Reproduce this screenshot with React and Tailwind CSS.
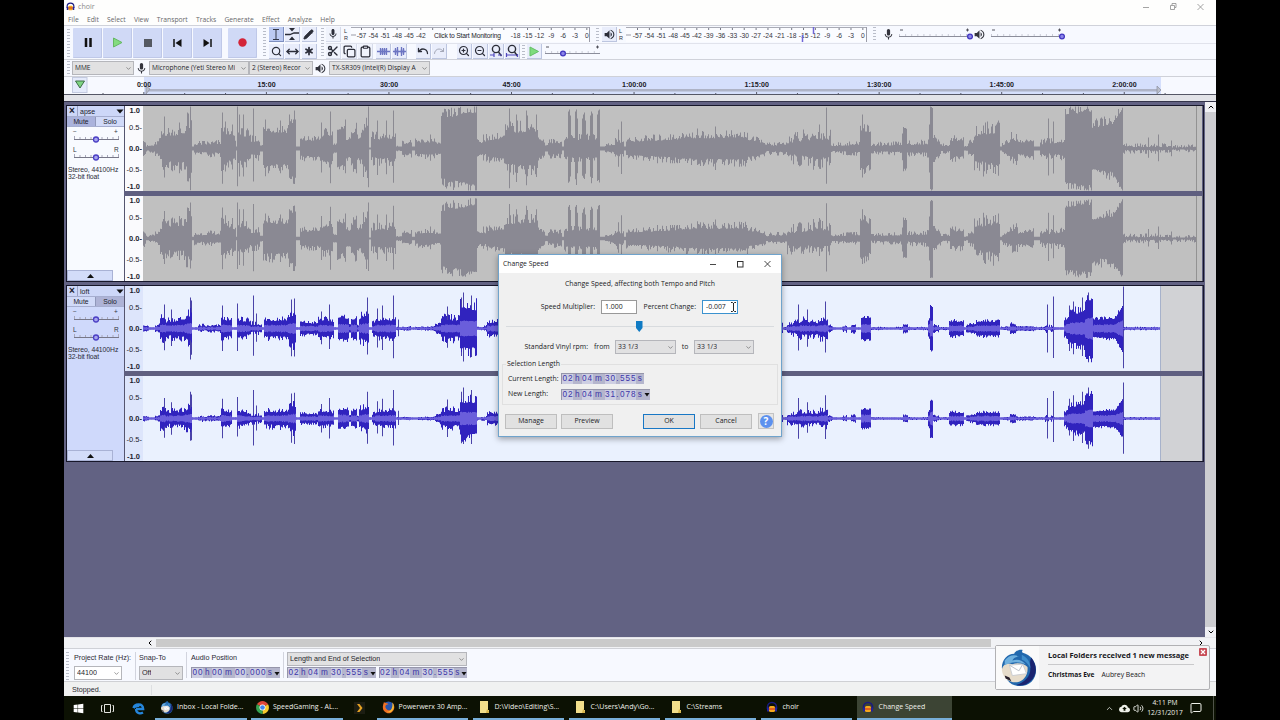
import clsx from "clsx";
import {
    Asterisk,
    ChevronDown,
    ChevronLeft,
    ChevronRight,
    ChevronUp,
    Clipboard,
    Copy,
    MessageSquare,
    MoveHorizontal,
    Pencil,
    Redo,
    Scissors,
    Search,
    Undo,
    Volume2,
    ZoomIn,
    ZoomOut,
} from "lucide-react";
import { MdCloudUpload, MdMic, MdVolumeUp } from "react-icons/md";
import { FaWindows } from "react-icons/fa";

// [from, to, start height, end height, jitter] in pixels along the timeline
const APSE_SEGMENTS = [
    [0, 3, 8, 5, 3], [3, 12, 2, 3, 2], [12, 17, 4, 7, 5], [17, 20, 10, 15, 8], [20, 42, 14, 15, 10],
    [42, 49, 20, 24, 18], [49, 51, 2, 2, 0], [51, 78, 4, 5, 5], [78, 93, 19, 8, 7], [93, 94, 2, 2, 0],
    [94, 107, 14, 11, 10], [107, 117, 7, 8, 9], [117, 120, 3, 3, 1], [120, 145, 18, 17, 11],
    [145, 153, 22, 31, 9], [153, 157, 2, 2, 0], [157, 178, 8, 9, 6], [178, 190, 13, 14, 9],
    [190, 194, 4, 4, 2], [194, 203, 20, 15, 8], [203, 208, 9, 9, 4], [208, 214, 15, 20, 8],
    [214, 219, 10, 12, 5], [219, 226, 16, 28, 13], [226, 228, 1, 1, 0], [228, 253, 10, 11, 9],
    [253, 259, 2, 2, 1], [259, 269, 5, 6, 4], [269, 272, 2, 2, 0], [272, 292, 6, 7, 5],
    [292, 298, 5, 5, 2], [298, 334, 31, 38, 10], [334, 338, 8, 6, 3], [338, 343, 6, 6, 4],
    [343, 362, 9, 11, 7], [362, 395, 17, 19, 12], [395, 402, 10, 6, 3], [402, 405, 3, 3, 1],
    [405, 419, 6, 6, 5], [419, 421, 2, 2, 0], [421, 457, 9, 10, 6], [457, 462, 2, 2, 0],
    [462, 472, 3, 4, 3], [472, 481, 7, 6, 6], [481, 483, 2, 2, 0], [483, 500, 7, 8, 5],
    [500, 535, 8, 10, 7], [535, 605, 11, 12, 8], [605, 622, 9, 6, 5], [622, 644, 3, 4, 4],
    [644, 670, 7, 10, 12], [670, 688, 12, 9, 13], [688, 717, 3, 4, 4], [717, 728, 20, 17, 11],
    [728, 759, 3, 4, 4], [759, 760, 12, 12, 4], [760, 764, 21, 20, 4], [764, 785, 4, 5, 5],
    [785, 786, 9, 9, 0], [786, 787, 24, 24, 0], [787, 790, 41, 41, 3],
    [790, 798, 11, 4, 4], [798, 807, 3, 3, 3], [807, 821, 8, 9, 6], [821, 825, 2, 2, 1],
    [825, 831, 5, 6, 4], [831, 857, 14, 18, 15], [857, 859, 2, 2, 0], [859, 867, 4, 7, 5],
    [867, 875, 9, 9, 11], [875, 891, 6, 8, 4], [891, 897, 2, 2, 0], [897, 922, 5, 7, 6],
    [922, 949, 35, 38, 8], [949, 970, 22, 25, 10], [970, 980, 27, 42, 6], [980, 1029, 2, 2, 4],
    [1029, 1054, 1, 2, 3],
];

const APSE_SPIKES = [
    [21, 32], [36, 26], [44, 36], [47, 42], [79, 36], [82, 27], [89, 24], [94, 42], [96, 34], [100, 34],
    [110, 40], [122, 29], [137, 28], [146, 34], [151, 38], [178, 26], [187, 37], [202, 29], [225, 42],
    [234, 28], [243, 28], [250, 38], [287, 14], [340, 14], [366, 40], [367, 27], [373, 34], [374, 28],
    [383, 38], [384, 33], [393, 34], [425, 37], [426, 39], [427, 33], [432, 37], [433, 39], [434, 30],
    [439, 30], [440, 34], [441, 36], [442, 28], [447, 33], [448, 37], [449, 35], [454, 34], [455, 38],
    [456, 39], [475, 19], [478, 27], [554, 20], [572, 22], [676, 24], [683, 41], [719, 34],
    [905, 30], [910, 27], [1005, 11], [1015, 14], [1028, 8],
];

const LOFT_SEGMENTS = [
    [0, 6, 3, 2, 1], [6, 12, 1, 1, 0], [12, 17, 2, 4, 2], [17, 23, 10, 10, 6], [23, 42, 7, 9, 6],
    [42, 49, 11, 14, 9], [49, 55, 1, 1, 0], [55, 61, 2, 3, 3], [61, 78, 2, 3, 2], [78, 89, 10, 7, 4],
    [89, 94, 1, 1, 0], [94, 107, 9, 6, 5], [107, 119, 4, 4, 5], [119, 121, 1, 1, 0], [121, 145, 8, 9, 7],
    [145, 153, 12, 15, 9], [153, 157, 1, 1, 0], [157, 175, 6, 5, 3], [175, 191, 9, 7, 5],
    [191, 195, 1, 1, 0], [195, 206, 11, 10, 4], [206, 208, 4, 4, 1], [208, 214, 9, 10, 3],
    [214, 216, 3, 3, 1], [216, 226, 10, 14, 7], [226, 229, 1, 1, 0], [229, 234, 5, 8, 3],
    [234, 253, 8, 9, 5], [253, 257, 1, 1, 1], [257, 268, 1, 2, 1], [268, 272, 1, 1, 0],
    [272, 292, 1, 2, 1], [292, 298, 3, 6, 2], [298, 317, 9, 9, 7], [317, 334, 21, 20, 12],
    [334, 344, 1, 2, 2], [344, 360, 6, 7, 4], [360, 460, 5, 5, 5], [460, 640, 4, 4, 4],
    [640, 644, 1, 2, 0], [644, 657, 4, 6, 5], [657, 676, 7, 6, 6], [676, 685, 8, 9, 7],
    [685, 690, 3, 2, 2], [690, 699, 1, 1, 0], [699, 704, 2, 3, 2], [704, 708, 1, 1, 0],
    [708, 713, 3, 4, 2], [713, 718, 1, 1, 0], [718, 728, 11, 11, 3], [728, 744, 1, 1, 1],
    [744, 753, 1, 1, 0], [753, 760, 1, 1, 1], [760, 765, 4, 4, 2], [765, 785, 1, 1, 1],
    [785, 787, 8, 13, 2], [787, 790, 22, 22, 3], [790, 796, 3, 2, 2], [796, 806, 1, 1, 1],
    [806, 821, 7, 7, 3], [821, 823, 1, 1, 0], [823, 833, 3, 5, 2], [833, 857, 7, 7, 3],
    [857, 867, 1, 2, 1], [867, 873, 5, 4, 2], [873, 891, 2, 2, 1], [891, 902, 1, 1, 1],
    [902, 912, 2, 1, 3], [912, 921, 1, 1, 0], [921, 928, 7, 16, 5], [928, 942, 15, 17, 8],
    [942, 950, 26, 31, 7], [950, 972, 9, 10, 3], [972, 980, 11, 24, 3], [980, 1017, 1, 1, 1],
];

const LOFT_SPIKES = [
    [21, 24], [28, 19], [47, 31], [48, 28], [79, 23], [94, 25], [110, 33], [113, 15], [148, 29],
    [151, 30], [178, 17], [186, 24], [224, 31], [234, 20], [239, 23], [250, 33], [255, 9], [304, 22],
    [318, 31], [320, 36], [328, 33], [655, 24], [664, 19], [682, 27], [904, 24], [910, 32], [926, 23],
    [930, 27], [939, 31], [945, 36], [980, 42],
];

function noise(x, seed) {
    const n = Math.sin(x * 12.9898 + seed * 78.233) * 43758.5453;
    return n - Math.floor(n);
}

function buildWave(segments, spikes, seed, scale) {
    let peak = "";
    let rms = "";
    const mid = 42.5;
    segments.forEach(([from, to, start, end, jitter]) => {
        for (let x = from; x < to; x++) {
            const base = start + ((end - start) * (x - from)) / (to - from);
            const up = Math.min(42, (base + jitter * (noise(x, seed) ** 2 - 0.15)) * scale);
            const down = Math.min(42, (base + jitter * (noise(x, seed + 3) ** 2 - 0.15)) * scale);
            peak += `M${x} ${(mid - Math.max(up, 1)).toFixed(1)}h1V${(mid + Math.max(down, 1)).toFixed(1)}h-1z`;
            const core = Math.max(0.6, base * scale * 0.34 + noise(x, seed + 7));
            rms += `M${x} ${(mid - core).toFixed(1)}h1V${(mid + core).toFixed(1)}h-1z`;
        }
    });
    const lines = spikes
        .map(([x, h]) => {
            const up = h * (scale < 1 ? 0.86 : 1);
            return `M${x} ${(mid - up).toFixed(1)}h1V${(mid + up * (0.82 + noise(x, seed) * 0.18)).toFixed(1)}h-1z`;
        })
        .join("");
    return { peak, rms, lines };
}

function Waveform({ kind, second }) {
    const loft = kind === "loft";
    const scale = second ? (loft ? 0.82 : 0.92) : 1;
    const wave = buildWave(loft ? LOFT_SEGMENTS : APSE_SEGMENTS, loft ? LOFT_SPIKES : APSE_SPIKES, second ? 5 : 2, scale);
    return (
        <svg width="1059" height="85" viewBox="0 0 1059 85" className="block shrink-0">
            <rect width="1059" height="85" fill={loft ? "#d1d2d5" : "#c0c0c0"} />
            {loft && <rect width="1018" height="85" fill="#eaf1fe" />}
            <path d={wave.lines} fill={loft ? "#4a43a8" : "#8b8a92"} />
            <path d={wave.peak} fill={loft ? "#3023be" : "#8a8993"} />
            {loft && <path d={wave.rms} fill="#6a5edb" />}
            <rect x={loft ? 1017 : 1053} width="1" height="85" fill={loft ? "#a7b2cb" : "#929292"} />
        </svg>
    );
}

function VerticalScale({ selected }) {
    return (
        <div
            className={clsx(
                "flex h-[85px] w-[19px] shrink-0 flex-col items-end justify-between border-l border-[#55556f] pr-[1px] font-['Liberation_Sans'] text-[7.5px] leading-[9px] text-[#22222c]",
                selected ? "bg-[#dde5fb]" : "bg-[#fafafd]"
            )}
        >
            <b className="pr-[2px]">1.0</b>
            <span className="pb-[4px]">0.5-</span>
            <b>0.0-</b>
            <span className="pt-[4px]">-0.5-</span>
            <b className="pr-[2px]">-1.0</b>
        </div>
    );
}

function PanelSlider({ left, right }) {
    return (
        <svg width="58" height="18" viewBox="0 0 58 18" className="block" fontFamily="Liberation Sans" fontSize="6.5">
            <text x="6" y="7" fill="#33333d">{left}</text>
            <text x="47" y="7" fill="#33333d">{right}</text>
            <path d="M7 12.5H52" stroke="#777788" />
            <path d="M7.5 9v3M13 10v2M18.500 10v2M24 10v2M35 10v2M40.500 10v2M46 10v2M51.500 9v3" stroke="#a7a7ba" />
            <circle cx="29" cy="12.500" r="2.500" fill="#a6a3ef" stroke="#4b3fc4" strokeWidth="1.300" />
        </svg>
    );
}

function Track({ name, kind, muted, soloed }) {
    return (
        <div className="flex h-[177px] w-[1138px] border border-[#17172a] bg-[#5f5f80]">
            <div className={clsx("flex w-[57px] shrink-0 flex-col", kind === "loft" ? "bg-[#cfd9fb]" : "bg-[#f8faff]")}>
                <div className="flex h-[10px] items-center bg-[#cdd7f8] font-['Liberation_Sans'] text-[7px] text-[#20202a]">
                    <span className="flex h-full w-[11px] items-center justify-center border-r border-[#9aa2c6] text-[10px] font-bold leading-none">×</span>
                    <span className="flex-1 pl-[2px] leading-none">{name}</span>
                    <svg width="8" height="5" viewBox="0 0 8 5"><path d="M.5.500h7L4 4.500z" fill="#111" /></svg>
                </div>
                <div className="flex h-[11px] border-y border-[#a6aed0] text-center font-['Liberation_Sans'] text-[6.8px] leading-[9px] text-[#20202a]">
                    <span className={clsx("flex-1 border-r border-[#9098ba]", muted ? "bg-[#aab2dc]" : "bg-[#d1daf8]")}>Mute</span>
                    <span className={clsx("flex-1", soloed ? "bg-[#aeb3d6]" : "bg-[#d1daf8]")}>Solo</span>
                </div>
                <PanelSlider left="−" right="+" />
                <PanelSlider left="L" right="R" />
                <div className="whitespace-nowrap pl-[1px] pt-[3px] font-['Liberation_Sans'] text-[6.8px] leading-[7px] tracking-[-0.05px] text-[#2a2a36]">
                    Stereo, 44100Hz<br />32-bit float
                </div>
                <div className="mt-auto flex h-[11px] w-[46px] items-center justify-center border border-[#a9b2d5] bg-[#d3dcf9]">
                    <svg width="7" height="4" viewBox="0 0 7 4"><path d="M0 4h7L3.500 0z" fill="#111" /></svg>
                </div>
            </div>
            <div className="flex flex-col gap-[5px]">
                <div className="flex">
                    <VerticalScale selected={kind === "loft"} />
                    <Waveform kind={kind} />
                </div>
                <div className="flex">
                    <VerticalScale selected={kind === "loft"} />
                    <Waveform kind={kind} second />
                </div>
            </div>
        </div>
    );
}

function Grabber({ className, height = 28 }) {
    return (
        <svg width="5" height={height} className={clsx("shrink-0", className)}>
            <path d={`M2.500 0V${height}`} stroke="#b9bdc9" strokeWidth="3" strokeDasharray="1 2" />
        </svg>
    );
}

function TransportButton({ children }) {
    return <div className="flex h-[30px] w-[29px] shrink-0 items-center justify-center rounded-[1px] bg-[#d0d9f6] shadow-[inset_-1px_-1px_0_#bfc8e8]">{children}</div>;
}

function Tool({ active, pale, className, children }) {
    return (
        <div
            className={clsx(
                "flex size-[15px] shrink-0 items-center justify-center border-b border-r text-[#2b2d38]",
                active ? "border-[#7d8fc0] bg-[#bccaf2]" : pale ? "border-[#d6dbea] bg-[#f0f3fc]" : "border-[#bcc5df] bg-[#e9edfb]",
                className
            )}
        >
            {children}
        </div>
    );
}

function ClipIcon({ gap }) {
    return (
        <svg width="13" height="11" viewBox="0 0 13 11" stroke="#6c75c2">
            <path d={gap ? "M0 5.500h13M2.500 2v7M4.500 1v9M8.500 1v9M10.500 2v7" : "M0 5.500h13M3.500 2v7M5.500 2v7M7.500 2v7M9.500 2v7"} strokeWidth="1.300" />
            {gap ? <path d="M1.500 5.500h4M7.500 5.500h4" strokeWidth="4" opacity=".45" /> : <path d="M3 5.500h7" strokeWidth="5" opacity=".45" />}
        </svg>
    );
}

function FitIcon({ wide }) {
    return (
        <svg width="14" height="14" viewBox="0 0 14 14" fill="none" stroke="#2b2d38" strokeWidth="1.400">
            <circle cx="7" cy="5" r="3.600" />
            <path d="M9.500 8l3 4" />
            <path d={wide ? "M1.500 9v4M12.500 10v3M2 11h9" : "M1 11h4M9 11h4M5 9v4"} stroke="#5148bf" strokeWidth="1.200" />
        </svg>
    );
}

function Meter({ width, offset, message, levels }) {
    const marks = Array.from({ length: 20 }, (_, i) => -57 + i * 3);
    return (
        <svg width={width} height="15" viewBox={`0 0 ${width} 15`} className="shrink-0 bg-[#fbfcff]" fontFamily="Liberation Sans" fontSize="6.700" fill="#33333d">
            <path d={`M0 .500H${width}`} stroke="#a9abb5" />
            <path d={`M0 8h5M${width - 0.5} 0v15`} stroke="#9b9ca8" />
            {marks.map((mark, i) => (
                <g key={mark}>
                    <path d={`M${offset + i * 11.86} 1v2`} stroke="#777986" />
                    {!(message && i > 5 && i < 13) && <text x={offset + i * 11.86} y="10.500" textAnchor="middle">{mark}</text>}
                </g>
            ))}
            {message && <text x="83" y="10.500" textLength="67" fill="#22222a">{message}</text>}
            {levels && <path d="M176.500 8v7M187.500 0v7" stroke="#7066d8" strokeWidth="1.500" />}
        </svg>
    );
}

function LeftRight() {
    return (
        <div className="flex w-[7px] shrink-0 flex-col font-['Liberation_Sans'] text-[5.5px] leading-[7px] text-[#33333d]">
            <span>L</span>
            <span>R</span>
        </div>
    );
}

function ToolbarSlider({ width, at }) {
    return (
        <svg width={width + 3} height="15" viewBox={`0 0 ${width + 3} 15`} className="shrink-0">
            <path d={`M1 9.500H${width}`} stroke="#8c8e9b" />
            <path d={`M1 8H${width}`} stroke="#b9bbc8" strokeDasharray="1 5.100" strokeWidth="1.500" />
            <path d={`M2 3h3M${width - 4} 3h3M${width - 2.5} 1.500v3`} stroke="#44444f" strokeWidth=".9" />
            <circle cx={at} cy="9.500" r="2.400" fill="#8b85e8" stroke="#4338c0" strokeWidth="1.300" />
        </svg>
    );
}

function Select({ className, children }) {
    return (
        <div className={clsx("flex shrink-0 items-center justify-between overflow-hidden whitespace-nowrap border border-[#b5b6bb] pl-[2px] pr-[1px] text-[#26262c]", className)}>
            <span className="overflow-hidden">{children}</span>
            <ChevronDown size={7} strokeWidth={2} className="shrink-0 text-[#555]" />
        </div>
    );
}

function TimeField({ value, arrow }) {
    return (
        <div className="flex h-[11px] w-fit shrink-0 items-center border-l border-t border-[#9696aa] bg-[#b5b6cd] font-['Liberation_Sans'] text-[8.2px] leading-[10px] text-[#3b35a8]">
            {value.split("").map((char, i) => (
                <span
                    key={i}
                    className={clsx(
                        "h-[10px] text-center",
                        /\d/.test(char) && "w-[5.5px] bg-[#cdcee2]",
                        char === "h" && "w-[8.5px]",
                        char === "m" && "w-[12px]",
                        char === "." && "w-[4px]",
                        char === "s" && "w-[7.5px]"
                    )}
                >
                    {char}
                </span>
            ))}
            {arrow && <svg width="6" height="5" viewBox="0 0 6 5"><path d="M.5 1h5L3 4.500z" fill="#111" /></svg>}
        </div>
    );
}

function Timeline() {
    const labels = ["0:00", "15:00", "30:00", "45:00", "1:00:00", "1:15:00", "1:30:00", "1:45:00", "2:00:00"];
    const ticks = Array.from({ length: 27 }, (_, i) => 39 + i * 40.85);
    return (
        <svg width="1152" height="18" viewBox="0 0 1152 18" className="block" fontFamily="Liberation Sans" fontSize="7.100" fontWeight="bold">
            <rect width="1152" height="18" fill="#f7f9ff" />
            <rect x="80" width="1017" height="18" fill="#d5dffc" />
            <rect x="82" y="12" width="1012" height="2.500" fill="#aeb3c6" />
            <path d="M82 9v8l4-5zM1093 9v8l4-4z" fill="#b9bdca" stroke="#8c909f" strokeWidth=".7" />
            {ticks.map((x, i) => <path key={x} d={`M${x} ${i % 3 === 1 ? 15 : 16}v3`} stroke="#555765" />)}
            {labels.map((label, i) => (
                <text key={label} x={80 + i * 122.55} y="10.300" textAnchor="middle" fill="#1c1c28">{label}</text>
            ))}
            <path d="M0 17.500H1152" stroke="#555766" />
            <rect x="8.500" y=".5" width="14.500" height="15" fill="#e4eafb" stroke="#c3cae0" />
            <path d="M11.500 4h9L16 11z" fill="#7ed482" stroke="#3d6e47" />
        </svg>
    );
}

function AudacityIcon({ size = 12 }) {
    return (
        <svg width={size} height={size} viewBox="0 0 12 12" className="shrink-0">
            <path d="M1.500 8V6a4.500 4.500 0 0 1 9 0v2" fill="none" stroke="#191a80" strokeWidth="1.600" />
            <rect x="3" y="5" width="6" height="6" rx="1.500" fill="#f6a81f" />
            <path d="M3 8h6" stroke="#d63c20" strokeWidth="1.300" />
            <path d="M1 6.500h2v4H1zM9 6.500h2v4H9z" fill="#22249c" />
        </svg>
    );
}

function BirdIcon({ size }) {
    return (
        <svg width={size} height={size} viewBox="0 0 40 40" className="shrink-0">
            <path d="M3 20C3 11 9 5 16 5c1-3 6-5 9-4-1 1-1 2 0 3 8 2 14 9 14 18 0 10-7 17-17 17-6 0-10-2-13-6z" fill="#2268ad" />
            <path d="M34 9c6 8 7 18-1 25-4 4-9 5-15 4 9-3 15-9 15-17 0-5-1-8 1-12z" fill="#1b2470" />
            <path d="M3 22c1-6 6-8 11-6 5-2 13-1 16 3 1 8-4 15-11 16-7 1-15-4-16-13z" fill="#e6dccb" />
            <path d="M11 17l14-1 4 10-15 2z" fill="#fff" stroke="#c9ccd2" />
            <path d="M11 17l10 6 4-7" fill="none" stroke="#b9bec6" />
            <path d="M6 28l5 2 2 4-6-3z" fill="#251d2a" />
            <path d="M6 12c4-5 10-7 15-4-4 0-6 2-7 4 6-2 11 0 14 4-7-3-15-3-22 1z" fill="#6fb0de" />
            <path d="M24 6c6 3 9 8 9 14-2-4-5-7-9-9z" fill="#3f8fcd" />
        </svg>
    );
}

function EdgeIcon() {
    return (
        <svg width="13" height="13" viewBox="0 0 13 13" fill="none" stroke="#2586dc" strokeWidth="2.300">
            <path d="M1.500 6C2.300 1.800 10.800.5 11.200 7H4M1.500 6c2-2.500 4-2.600 6-2M4 7c.2 5 4.800 4.800 7 3.500" />
        </svg>
    );
}

function ChromeIcon() {
    return (
        <svg width="13" height="13" viewBox="0 0 14 14">
            <path d="M7 7L1 3.500A7 7 0 0 1 13 3.500z" fill="#e04739" />
            <path d="M7 7l6-3.500A7 7 0 0 1 7 14z" fill="#f7c92d" />
            <path d="M7 7v7A7 7 0 0 1 1 3.500z" fill="#36a351" />
            <circle cx="7" cy="7" r="3.200" fill="#fff" />
            <circle cx="7" cy="7" r="2.500" fill="#4286ed" />
        </svg>
    );
}

function FirefoxIcon() {
    return (
        <svg width="14" height="14" viewBox="0 0 14 14">
            <circle cx="7" cy="7" r="6" fill="#2655ae" />
            <path d="M2 2c2 1 4 1 5 2-3 0-4 2-3 4 2 4 7 3 8-1 .5-2 0-4-1-5 3 3 3 8 0 10C7 16 0 12 1 6z" fill="#ef6f21" />
            <path d="M11 2c3 4 2 8-1 10-2 1-4 1-5 0 5 1 7-5 6-10z" fill="#f7bd31" />
        </svg>
    );
}

function FolderIcon() {
    return (
        <svg width="9" height="12" viewBox="0 0 9 12">
            <path d="M0 0h8v9h1v3H0z" fill="#f2df8b" />
            <path d="M7 8l2 2v2H6z" fill="#d9b84d" />
        </svg>
    );
}

function TaskButton({ icon, active, children }) {
    return (
        <div
            className={clsx(
                "flex h-full shrink-0 items-center gap-[4px] whitespace-nowrap border-b-2 border-[#78afd9] pl-[5px] text-[7px] text-[#eff0ea]",
                active ? "w-[95px] bg-[#3c4434]" : "w-[91.500px]"
            )}
        >
            <span className="flex w-[13px] shrink-0 justify-center">{icon}</span>
            <span>{children}</span>
        </div>
    );
}

function Button({ primary, children }) {
    return (
        <div className={clsx("flex h-[15px] w-[52px] shrink-0 items-center justify-center bg-[#e1e1e1]", primary ? "border-[1.5px] border-[#1877c5]" : "border border-[#bebebe]")}>
            {children}
        </div>
    );
}

function ChangeSpeedDialog() {
    return (
        <div className="absolute left-[498px] top-[254px] flex h-[183px] w-[284px] flex-col border border-[#6fa3cc] bg-[#f0f0f0] font-['Open_Sans'] text-[6.9px] leading-[10px] text-[#202024] shadow-[0_2px_6px_rgba(0,0,0,.35)]">
            <div className="flex h-[18px] shrink-0 items-center bg-white pl-[4px]">
                <span className="flex-1 text-[6.8px]">Change Speed</span>
                <svg width="66" height="8" viewBox="0 0 66 8" fill="none" stroke="#333" className="mr-[6px]">
                    <path d="M1 4.500h6M55.500 1l6 6M61.500 1l-6 6" strokeWidth=".9" />
                    <rect x="28.500" y="1.500" width="5.500" height="5.500" />
                </svg>
            </div>
            <div className="flex h-[21px] items-center justify-center">Change Speed, affecting both Tempo and Pitch</div>
            <div className="flex h-[25px] items-center whitespace-nowrap">
                <span className="w-[102px] pr-[6px] text-right">Speed Multiplier:</span>
                <span className="h-[14px] w-[36px] border border-[#999] bg-white pl-[3px] leading-[12px]">1.000</span>
                <span className="w-[65px] pr-[6px] text-right">Percent Change:</span>
                <span className="flex h-[14px] w-[36px] items-center border border-[#3b92cf] bg-white pl-[3px] pr-[1px]">
                    <span className="flex-1">-0.007</span>
                    <svg width="5" height="10" viewBox="0 0 5 10" fill="none" stroke="#111" strokeWidth=".9"><path d="M0 .5h1.500l1 1 1-1H5M2.500 1v8M0 9.500h1.500l1-1 1 1H5" /></svg>
                </span>
            </div>
            <svg width="282" height="18" viewBox="0 0 282 18" className="block shrink-0">
                <path d="M7 7.500H275" stroke="#d8dbde" />
                <path d="M137 2h6.500v7L140.250 13 137 9z" fill="#107bc4" />
            </svg>
            <div className="flex h-[20px] items-center whitespace-nowrap">
                <span className="w-[89px] text-right">Standard Vinyl rpm:</span>
                <span className="w-[27px] pl-[6px]">from</span>
                <Select className="h-[14px] w-[61px] bg-[#e1e1e2]">33 1/3</Select>
                <span className="w-[18px] text-center">to</span>
                <Select className="h-[14px] w-[60px] bg-[#e1e1e2]">33 1/3</Select>
            </div>
            <fieldset className="mx-[3px] mt-[3px] h-[45px] border border-[#e0e0e0]">
                <legend className="ml-[3px] h-[8px] px-[1px] leading-[8px]">Selection Length</legend>
                <div className="flex flex-col gap-[4.5px] pt-[5px]">
                    <div className="flex h-[11px] items-center">
                        <span className="w-[58px] whitespace-nowrap pl-[5px]">Current Length:</span>
                        <TimeField value="02h04m30.555s" />
                    </div>
                    <div className="flex h-[11px] items-center">
                        <span className="w-[58px] whitespace-nowrap pl-[5px]">New Length:</span>
                        <TimeField value="02h04m31.078s" arrow />
                    </div>
                </div>
            </fieldset>
            <div className="mt-auto flex h-[29px] items-center pb-[1px] pl-[6px]">
                <Button>Manage</Button>
                <div className="ml-[4px]"><Button>Preview</Button></div>
                <div className="ml-[30px]"><Button primary>OK</Button></div>
                <div className="ml-[5px]"><Button>Cancel</Button></div>
                <div className="ml-[6px] flex size-[16px] items-center justify-center border border-[#c3c3c3] bg-[#e5e5e5]">
                    <span className="flex size-[13px] items-center justify-center rounded-full bg-[#5d91ee] text-[10px] font-bold text-white">?</span>
                </div>
            </div>
        </div>
    );
}

function MailPopup() {
    return (
        <div className="absolute left-[995px] top-[645px] flex h-[45px] w-[215px] rounded-[2px] border border-[#b1b1b4] bg-[#f3f3f4] font-['Open_Sans'] text-[#17171b]">
            <div className="flex w-[43px] items-center justify-center bg-[#fafafa]"><BirdIcon size={38} /></div>
            <div className="flex flex-1 flex-col whitespace-nowrap pl-[9px] pt-[3px]">
                <div className="text-[7.5px] font-bold leading-[12px]">Local Folders received 1 new message</div>
                <div className="mt-[3px] w-[146px] border-t border-[#c9c9cb]"></div>
                <div className="flex gap-[7px] pt-[4px] text-[6.8px] leading-[11px]">
                    <b className="text-[6.6px]">Christmas Eve</b>
                    <span>Aubrey Beach</span>
                </div>
            </div>
            <svg width="8" height="8" viewBox="0 0 8 8" className="mr-[2px] mt-[2px] shrink-0">
                <rect width="8" height="8" rx="1" fill="#c84d58" />
                <path d="M2 2l4 4M6 2L2 6" stroke="#fff" strokeWidth="1.200" />
            </svg>
        </div>
    );
}

function Toolbars() {
    return (
        <div className="h-[35px] border-y border-[#d0d2da] bg-[#f7f9ff]">
            <div className="flex h-[33px]">
                <div className="flex w-[196px] shrink-0 items-center gap-[1px] pl-[2px]">
                    <Grabber className="mr-[1px]" />
                    <TransportButton><svg width="8" height="9"><path d="M2 0v9M6.500 0v9" stroke="#111" strokeWidth="2.500" /></svg></TransportButton>
                    <TransportButton><svg width="11" height="11"><path d="M1.500 1v9L10 5.500z" fill="#83dc7f" stroke="#65b764" /></svg></TransportButton>
                    <TransportButton><svg width="8" height="8"><path d="M0 0h8v8H0z" fill="#555962" /></svg></TransportButton>
                    <TransportButton><svg width="9" height="8"><path d="M1 0v8" stroke="#111" strokeWidth="1.500" /><path d="M8.500 0v8L2.500 4z" fill="#111" /></svg></TransportButton>
                    <TransportButton><svg width="9" height="8"><path d="M8 0v8" stroke="#111" strokeWidth="1.500" /><path d="M.5 0v8l6-4z" fill="#111" /></svg></TransportButton>
                    <div className="ml-[5px]"><TransportButton><svg width="9" height="9"><circle cx="4.500" cy="4.500" r="4.200" fill="#d32438" /></svg></TransportButton></div>
                </div>
                <Grabber className="ml-[2px] mt-[2px]" />
                <div className="ml-[2px] grid w-[48px] grid-cols-3 content-start gap-x-[1px] gap-y-[2px] pt-[1px]">
                    <Tool active><svg width="8" height="11" fill="none" stroke="#333746"><path d="M1 .5h6M4 1v9M1 10.500h6" /></svg></Tool>
                    <Tool><svg width="14" height="12" stroke="#2b2d38" fill="#2b2d38"><path d="M0 6.500h5l4-1.500h5" fill="none" strokeWidth="1.300" /><path d="M4 0h6L7 3.500zM4 12h6L7 8.500z" stroke="none" /></svg></Tool>
                    <Tool><Pencil size={11} fill="currentColor" /></Tool>
                    <Tool><Search size={11} strokeWidth={2.5} /></Tool>
                    <Tool><MoveHorizontal size={13} strokeWidth={2.5} /></Tool>
                    <Tool><Asterisk size={14} strokeWidth={3} /></Tool>
                </div>
                <Grabber className="ml-[3px] mt-[2px]" />
                <div className="ml-[1px] flex flex-1 flex-col">
                    <div className="flex h-[17px] items-center">
                        <Tool pale><MdMic size={12} /></Tool>
                        <div className="ml-[3px]"><LeftRight /></div>
                        <Meter width={239} offset={10.5} message="Click to Start Monitoring" />
                        <Grabber height={14} className="ml-[5px]" />
                        <div className="ml-[2px] flex"><Tool><MdVolumeUp size={13} /></Tool></div>
                        <div className="ml-[2px]"><LeftRight /></div>
                        <Meter width={241} offset={11.5} levels />
                        <Grabber height={15} className="ml-[5px]" />
                        <div className="ml-[5px] flex text-[#33343d]"><MdMic size={13} /></div>
                        <div className="ml-[3px]"><ToolbarSlider width={72} at={72} /></div>
                        <div className="flex text-[#33343d]"><MdVolumeUp size={13} /></div>
                        <div className="ml-[4px]"><ToolbarSlider width={72} at={72} /></div>
                    </div>
                    <div className="flex h-[16px] items-center gap-[1px] border-t border-[#e1e3ec]">
                        <Tool pale><Scissors size={12} strokeWidth={2.7} /></Tool>
                        <Tool pale><Copy size={13} strokeWidth={2.3} /></Tool>
                        <Tool pale><Clipboard size={13} strokeWidth={2.3} /></Tool>
                        <Tool className="ml-[2px]"><ClipIcon /></Tool>
                        <Tool><ClipIcon gap /></Tool>
                        <Tool className="ml-[8px]"><Undo size={12} strokeWidth={2.6} /></Tool>
                        <Tool><Redo size={12} className="text-[#a5a9b8]" /></Tool>
                        <Tool className="ml-[9px]"><ZoomIn size={12} strokeWidth={2.4} /></Tool>
                        <Tool><ZoomOut size={12} strokeWidth={2.4} /></Tool>
                        <Tool><FitIcon /></Tool>
                        <Tool><FitIcon wide /></Tool>
                        <Grabber height={14} />
                        <Tool><svg width="10" height="11"><path d="M1 1v9l8.500-4.500z" fill="#7edc7d" stroke="#64bd67" /></svg></Tool>
                        <div className="ml-[1px]"><ToolbarSlider width={56} at={19} /></div>
                    </div>
                </div>
            </div>
        </div>
    );
}

function SelectionBar() {
    return (
        <div className="flex h-[33px] items-start border-t border-[#cfd1d7] bg-[#f7f9ff] pt-[3px] font-['Liberation_Sans'] text-[7.2px] leading-[12px] text-[#2a2a34]">
            <Grabber className="ml-[1px]" />
            <div className="ml-[4px] flex w-[61px] flex-col gap-[2px] whitespace-nowrap">
                <span className="h-[12px]">Project Rate (Hz):</span>
                <Select className="h-[14px] w-[48px] bg-white">44100</Select>
            </div>
            <div className="flex w-[48px] flex-col gap-[2px] border-l border-[#d2d4de] pl-[3px]">
                <span className="h-[12px]">Snap-To</span>
                <Select className="h-[14px] w-[44px] bg-[#e1e1e2]">Off</Select>
            </div>
            <div className="ml-[3px] flex w-[97px] flex-col gap-[3px] border-l border-[#d2d4de] pl-[4px]">
                <span className="h-[12px]">Audio Position</span>
                <TimeField value="00h00m00.000s" arrow />
            </div>
            <div className="flex flex-col gap-[1px] border-l border-[#d2d4de] pl-[3px]">
                <Select className="h-[14px] w-[180px] bg-[#e1e1e2]">Length and End of Selection</Select>
                <div className="flex gap-[3px]">
                    <TimeField value="02h04m30.555s" arrow />
                    <TimeField value="02h04m30.555s" arrow />
                </div>
            </div>
        </div>
    );
}

function Taskbar() {
    return (
        <div className="flex h-[24px] bg-[#0c1103] font-['Open_Sans']">
            <div className="flex w-[28px] items-center justify-center text-white"><FaWindows size={11} /></div>
            <div className="flex w-[30px] items-center justify-center">
                <svg width="13" height="11" fill="none" stroke="#e2e3df"><path d="M3.500 1.500h6v8h-6zM1.500 2.500H.5v6h1M11.500 2.500h1v6h-1" /></svg>
            </div>
            <div className="flex w-[33px] items-center justify-center"><EdgeIcon /></div>
            <div className="flex flex-1 gap-[4.500px]">
                <TaskButton icon={<BirdIcon size={13} />}>Inbox - Local Folde...</TaskButton>
                <TaskButton icon={<ChromeIcon />}>SpeedGaming - AL...</TaskButton>
                <div className="flex w-[25px] shrink-0 items-center justify-center">
                    <svg width="11" height="12"><path d="M0 0h11v12H0z" fill="#1c1d12" /><path d="M3 2h2.500l3 4-3 4H3l3-4z" fill="#e5a224" /></svg>
                </div>
                <TaskButton icon={<FirefoxIcon />}>Powerwerx 30 Amp...</TaskButton>
                <TaskButton icon={<FolderIcon />}>D:\Video\Editing\S...</TaskButton>
                <TaskButton icon={<FolderIcon />}>C:\Users\Andy\Go...</TaskButton>
                <TaskButton icon={<FolderIcon />}>C:\Streams</TaskButton>
                <TaskButton icon={<AudacityIcon />}>choir</TaskButton>
                <TaskButton active icon={<AudacityIcon />}>Change Speed</TaskButton>
            </div>
            <div className="flex w-[111px] shrink-0 items-center text-[#eef0ea]">
                <ChevronUp size={9} />
                <MdCloudUpload size={11} className="ml-[5px]" />
                <Volume2 size={11} className="ml-[3px]" />
                <div className="ml-[1px] w-[40px] text-center text-[6.7px] leading-[10.500px]">4:11 PM<br />12/31/2017</div>
                <MessageSquare size={12} className="ml-[5px]" />
                <div className="ml-[11px] h-full w-[1px] bg-[#4f5349]"></div>
            </div>
        </div>
    );
}

export default function App() {
    return (
        <div className="relative h-[720px] w-[1280px] overflow-hidden bg-black px-[64px] font-['Open_Sans',sans-serif]">
            <div className="flex h-[720px] w-[1152px] flex-col bg-[#fefefd]">
                <div className="flex h-[13px] items-center pl-[2px] text-[7.1px] text-[#8a8a8a]">
                    <AudacityIcon size={9} />
                    <span className="flex-1 pl-[3px]">choir</span>
                    <svg width="65" height="8" viewBox="0 0 65 8" fill="none" stroke="#8d8d8d" className="mr-[11px]">
                        <path d="M3 4.500h6M57.500 1l6 6M63.500 1l-6 6" strokeWidth=".8" />
                        <path d="M30.500 2.500h4v4h-4zM32 2V.5h4v4h-1" strokeWidth=".8" />
                    </svg>
                </div>
                <div className="flex h-[12px] items-center gap-[8.200px] pl-[4px] pt-[2px] text-[6.75px] text-[#68686b]">
                    {["File", "Edit", "Select", "View", "Transport", "Tracks", "Generate", "Effect", "Analyze", "Help"].map((item) => (
                        <span key={item}>{item}</span>
                    ))}
                </div>
                <Toolbars />
                <div className="flex h-[17px] items-center border-b border-[#cfd1d8] bg-[#f7f9ff] text-[6.6px] leading-[12px]">
                    <Grabber height={14} className="ml-[2px]" />
                    <Select className="ml-[1px] h-[14px] w-[62px] bg-[#e1e1e2]">MME</Select>
                    <MdMic size={13} className="mx-[1px] text-[#33343d]" />
                    <Select className="h-[14px] w-[100px] bg-[#e1e1e2]">Microphone (Yeti Stereo Mi</Select>
                    <Select className="h-[14px] w-[64px] bg-[#e1e1e2]">2 (Stereo) Recor</Select>
                    <MdVolumeUp size={13} className="ml-[1px] mr-[2px] text-[#33343d]" />
                    <Select className="h-[14px] w-[101px] bg-[#e1e1e2]">TX-SR309 (Intel(R) Display A</Select>
                </div>
                <Timeline />
                <div className="h-[7px] border-b border-[#34344a] bg-[#e2e3e8]"></div>
                <div className="flex h-[535px] bg-[#626283]">
                    <div className="flex flex-1 flex-col gap-[3px] pl-[2px] pt-[3px]">
                        <Track name="apse" kind="apse" muted />
                        <Track name="loft" kind="loft" soloed />
                    </div>
                    <div className="flex w-[11px] shrink-0 flex-col items-center justify-between bg-[#cdcdd1]">
                        <div className="flex h-[10px] w-full items-center justify-center bg-[#f0f0f4]"><ChevronUp size={8} strokeWidth={3} /></div>
                        <div className="flex h-[10px] w-full items-center justify-center bg-[#f0f0f4]"><ChevronDown size={8} strokeWidth={3} /></div>
                    </div>
                </div>
                <div className="flex h-[11px] items-center border-t border-[#e4e4e9] bg-[#f1f2f5]">
                    <ChevronLeft size={8} strokeWidth={3} className="ml-[82px]" />
                    <div className="ml-[2px] h-[8px] w-[835px] bg-[#cacaca]"></div>
                    <ChevronRight size={8} strokeWidth={3} className="ml-auto mr-[11px]" />
                </div>
                <SelectionBar />
                <div className="flex h-[15px] items-center border-t border-[#cfd0d4] bg-[#f0f1f1] pt-[2px] font-['Liberation_Sans'] text-[7.2px] text-[#2b2b30]">
                    <span className="w-[88px] border-r border-[#dddfe1] pl-[8px]">Stopped.</span>
                </div>
                <Taskbar />
            </div>
            <ChangeSpeedDialog />
            <MailPopup />
        </div>
    );
}
